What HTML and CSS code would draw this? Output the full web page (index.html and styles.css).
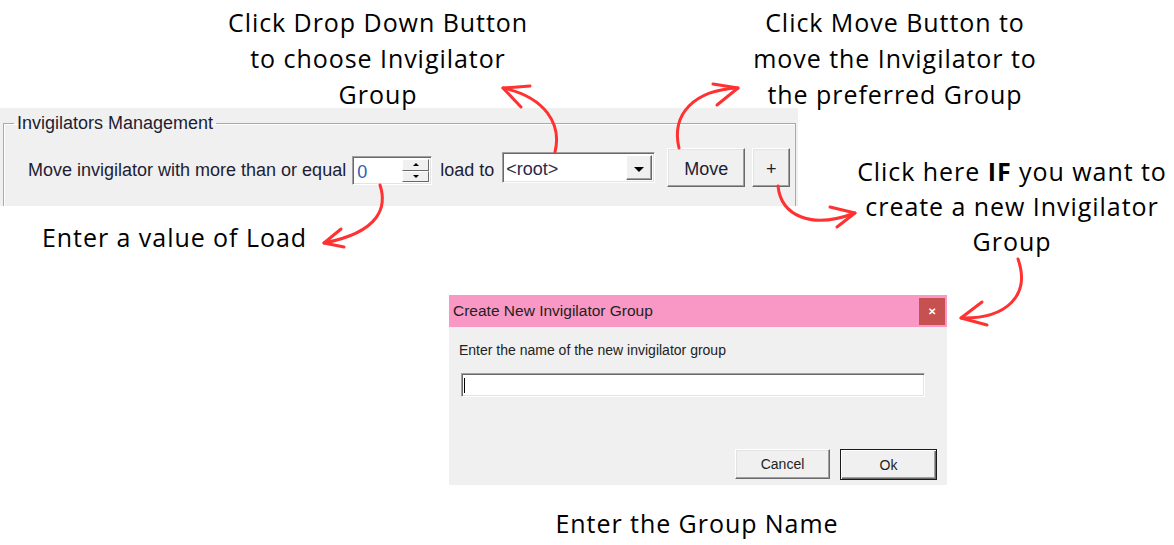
FILE: index.html
```html
<!DOCTYPE html>
<html lang="en">
<head>
<meta charset="utf-8">
<title>Invigilators Management</title>
<link rel="stylesheet" href="styles.css">
</head>
<body>
<div class="canvas">
  <p class="callout c-drop">Click Drop Down Button<br>to choose Invigilator<br>Group</p>
  <p class="callout c-move">Click Move Button to<br>move the Invigilator to<br>the preferred Group</p>
  <p class="callout c-plus">Click here <b>IF</b> you want to<br>create a new Invigilator<br>Group</p>
  <p class="callout c-load">Enter a value of Load</p>
  <p class="callout c-name">Enter the Group Name</p>

  <section class="panel">
    <fieldset class="groupbox">
      <legend>Invigilators Management</legend>
      <div class="row">
        <span class="lbl lbl-move">Move invigilator with more than or equal</span>
        <div class="spin">
          <span class="spin-val">0</span>
          <div class="spin-btns">
            <span class="spin-btn"><i class="tri-up"></i></span>
            <span class="spin-btn"><i class="tri-down"></i></span>
          </div>
        </div>
        <span class="lbl lbl-load">load to</span>
        <div class="combo">
          <span class="combo-val">&lt;root&gt;</span>
          <span class="combo-drop"><i class="tri-big"></i></span>
        </div>
        <button class="btn btn-move">Move</button>
        <button class="btn btn-plus">+</button>
      </div>
    </fieldset>
  </section>

  <div class="dialog">
    <div class="titlebar">
      <span class="title">Create New Invigilator Group</span>
      <span class="close">&#x2715;</span>
    </div>
    <div class="dlg-body">
      <div class="dlg-label">Enter the name of the new invigilator group</div>
      <div class="textbox"><span class="caret"></span></div>
      <div class="dlg-actions">
        <button class="dbtn">Cancel</button>
        <button class="dbtn dbtn-default">Ok</button>
      </div>
    </div>
  </div>

  <svg class="arrows" width="1174" height="545" viewBox="0 0 1174 545">
    <g fill="none" stroke="#ff3131" stroke-width="3" stroke-linecap="round" stroke-linejoin="round">
      <path d="M380,185 C387,206 381,232 324,243"/>
      <path d="M341,229 L324,243 L344,247"/>
      <path d="M555,152 C562,124 545,97 503,88"/>
      <path d="M530,86 L503,88 L521,107"/>
      <path d="M679,148 C671,114 694,90 738,88"/>
      <path d="M713,84 L738,88 L717,105"/>
      <path d="M778,186 C781,215 810,230 855,213"/>
      <path d="M830,207 L855,213 L837,227"/>
      <path d="M1018,259 C1031,296 1006,319 961,318"/>
      <path d="M982,302 L961,318 L987,325"/>
    </g>
  </svg>
</div>
</body>
</html>
```

FILE: styles.css
```css
* { box-sizing: border-box; }

html, body {
  margin: 0;
  padding: 0;
  background: #ffffff;
}

.canvas {
  position: relative;
  width: 1174px;
  height: 545px;
  overflow: hidden;
  font-family: "Liberation Sans", Arial, sans-serif;
}

/* ---------- annotation callouts ---------- */
.callout {
  position: absolute;
  margin: 0;
  font-family: "Open Sans", "Noto Sans", sans-serif;
  font-size: 25px;
  line-height: 36px;
  letter-spacing: 0.95px;
  color: #000;
  text-align: center;
  white-space: nowrap;
}
.callout b { font-weight: 700; }
.c-drop { left: 178px; top: 4px; width: 400px; }
.c-move { left: 745px; top: 4px; width: 300px; }
.c-plus { left: 852px; top: 154px; width: 320px; line-height: 35px; }
.c-load { left: 42px; top: 219px; text-align: left; }
.c-name { left: 547px; top: 505px; width: 300px; }

/* ---------- top panel ---------- */
.panel {
  width: 798px;
  height: 98px;
  margin-top: 108px;
  padding: 4px 0 0 3px;
  background: #f0f0f0;
  overflow: hidden;
}

.groupbox {
  width: 793px;
  height: 130px;
  margin: 0;
  padding: 0;
  border: 1px solid #a9a9a9;
  box-shadow: inset 1px 1px 0 #ffffff;
  min-inline-size: 0;
}

.groupbox legend {
  margin-left: 10px;
  padding: 0 3px;
  font-size: 18px;
  line-height: 22px;
  color: #1d1d33;
}

.row {
  display: flex;
  align-items: center;
  height: 39px;
  margin-top: 14px;
  padding-left: 24px;
  font-size: 18px;
  color: #1d1d33;
}

.lbl {
  line-height: 20px;
  margin-top: 4px;
  white-space: nowrap;
}
.lbl-load { margin-left: 8px; }

.spin {
  display: flex;
  width: 80px;
  height: 29px;
  margin-left: 6px;
  margin-top: 6px;
  background: #fff;
  border-top: 1px solid #a0a0a0;
  border-left: 1px solid #a0a0a0;
  border-right: 1px solid #ffffff;
  border-bottom: 1px solid #ffffff;
  box-shadow: inset 1px 1px 0 #696969, inset -1px -1px 0 #e3e3e3;
}
.spin-val {
  flex: 1;
  padding: 5px 0 0 4px;
  line-height: 20px;
  color: #2b5fae;
}
.spin-btns {
  display: flex;
  flex-direction: column;
  width: 27px;
  margin: 2px 2px 2px 0;
}
.spin-btn {
  flex: 1;
  display: flex;
  align-items: center;
  justify-content: center;
  background: #f0f0f0;
  border-top: 1px solid #ffffff;
  border-left: 1px solid #ffffff;
  border-right: 1px solid #696969;
  border-bottom: 1px solid #696969;
}
.tri-up, .tri-down, .tri-big {
  display: block;
  width: 0;
  height: 0;
}
.tri-up {
  border-left: 3px solid transparent;
  border-right: 3px solid transparent;
  border-bottom: 3px solid #000;
}
.tri-down {
  border-left: 3px solid transparent;
  border-right: 3px solid transparent;
  border-top: 3px solid #000;
}

.combo {
  display: flex;
  width: 153px;
  height: 31px;
  margin-left: 8px;
  background: #fff;
  border-top: 1px solid #a0a0a0;
  border-left: 1px solid #a0a0a0;
  border-right: 1px solid #ffffff;
  border-bottom: 1px solid #ffffff;
  box-shadow: inset 1px 1px 0 #696969, inset -1px -1px 0 #e3e3e3;
}
.combo-val {
  flex: 1;
  padding: 6px 0 0 3px;
  line-height: 20px;
  color: #2a2a48;
}
.combo-drop {
  display: flex;
  align-items: center;
  justify-content: center;
  width: 26px;
  margin: 2px 2px 2px 0;
  background: #f0f0f0;
  border-top: 1px solid #ffffff;
  border-left: 1px solid #ffffff;
  border-right: 1px solid #696969;
  border-bottom: 1px solid #696969;
  box-shadow: inset -1px -1px 0 #a0a0a0;
}
.tri-big {
  margin-top: 3px;
  border-left: 5px solid transparent;
  border-right: 5px solid transparent;
  border-top: 5px solid #000;
}

.btn {
  height: 39px;
  padding: 3px 0 0 0;
  font-family: "Liberation Sans", Arial, sans-serif;
  font-size: 18px;
  color: #1d1d33;
  background: #f0f0f0;
  border-top: 1px solid #ffffff;
  border-left: 1px solid #ffffff;
  border-right: 1px solid #696969;
  border-bottom: 1px solid #696969;
  box-shadow: inset -1px -1px 0 #a0a0a0, inset 1px 1px 0 #e3e3e3;
}
.btn-move { width: 78px; margin-left: 12px; }
.btn-plus { width: 38px; margin-left: 7px; }

/* ---------- dialog ---------- */
.dialog {
  width: 498px;
  margin: 89px 0 0 449px;
  background: #f0f0f0;
}
.titlebar {
  display: flex;
  align-items: center;
  justify-content: space-between;
  height: 32px;
  padding: 0 2px 0 4px;
  background: #f998c4;
}
.title {
  font-size: 15.5px;
  color: #222;
}
.close {
  display: flex;
  align-items: center;
  justify-content: center;
  width: 26px;
  height: 27px;
  background: #c75050;
  color: #fff;
  font-size: 10px;
  font-weight: 700;
}
.dlg-body {
  height: 158px;
  padding: 15px 10px 0 10px;
}
.dlg-label {
  font-size: 14px;
  line-height: 16px;
  color: #222;
}
.textbox {
  position: relative;
  width: 464px;
  height: 24px;
  margin: 15px 0 0 2px;
  background: #fff;
  border-top: 1px solid #a0a0a0;
  border-left: 1px solid #a0a0a0;
  border-right: 1px solid #ffffff;
  border-bottom: 1px solid #ffffff;
  box-shadow: inset 1px 1px 0 #696969, inset -1px -1px 0 #e3e3e3;
}
.caret {
  position: absolute;
  left: 2px;
  top: 4px;
  width: 1px;
  height: 15px;
  background: #000;
}
.dlg-actions {
  display: flex;
  justify-content: flex-end;
  gap: 10px;
  margin-top: 52px;
}
.dbtn {
  width: 95px;
  height: 30px;
  padding: 0;
  font-family: "Liberation Sans", Arial, sans-serif;
  font-size: 14px;
  color: #222;
  background: #f0f0f0;
  border-top: 1px solid #ffffff;
  border-left: 1px solid #ffffff;
  border-right: 1px solid #696969;
  border-bottom: 1px solid #696969;
  box-shadow: inset -1px -1px 0 #a0a0a0, inset 1px 1px 0 #e3e3e3;
}
.dbtn-default {
  width: 97px;
  height: 31px;
  border: 1px solid #1a1a1a;
  box-shadow: inset 1px 1px 0 #ffffff, inset -1px -1px 0 #696969, inset -2px -2px 0 #a0a0a0;
}

/* ---------- arrows overlay ---------- */
.arrows {
  position: absolute;
  left: 0;
  top: 0;
  pointer-events: none;
}
```
